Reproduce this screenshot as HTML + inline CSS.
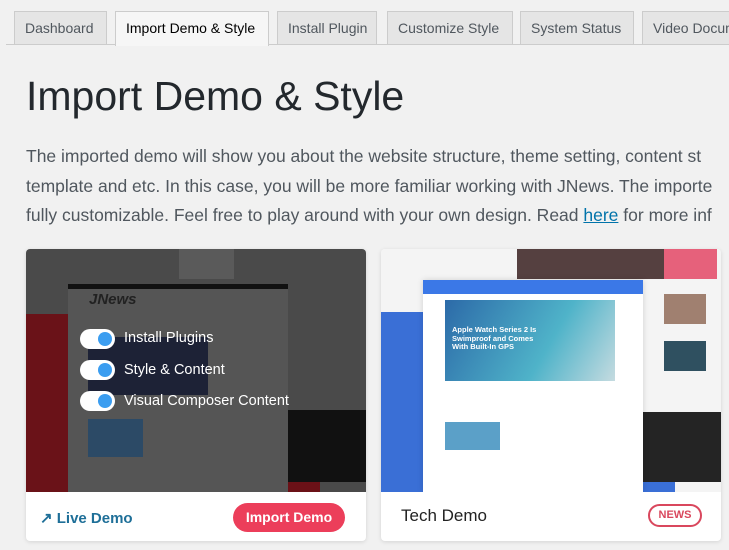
<!DOCTYPE html><html><head><style>
body{margin:0;width:729px;height:550px;overflow:hidden;background:#f1f1f1;font-family:"Liberation Sans",sans-serif;position:relative}
.tab{position:absolute;top:11px;height:33px;background:#e5e5e5;border:1px solid #ccc;border-bottom:none;font-size:14px;color:#50575e;line-height:33px;padding:0 10px;box-sizing:border-box;white-space:nowrap;overflow:hidden}
.tab.a{background:#f6f6f6;color:#000;height:35px}
.line{position:absolute;top:44px;left:6px;right:0;height:1px;background:#ccc}
h1{position:absolute;left:26px;top:73px;margin:0;font-weight:400;font-size:41px;color:#23282d}
p{position:absolute;left:26px;top:142px;margin:0;font-size:17.5px;line-height:29.5px;color:#50575e;white-space:nowrap}
a{color:#0073aa}
.card{position:absolute;top:249px;width:340px;height:292px;background:#fff;border-radius:4px;box-shadow:0 1px 4px rgba(0,0,0,.12);overflow:hidden}
.img{position:absolute;left:0;top:0;width:340px;height:243px;overflow:hidden}
.b{position:absolute}
.tg{position:absolute;left:54px;width:35px;height:20px;border-radius:10px;background:#fff}
.tg:after{content:"";position:absolute;right:3px;top:3px;width:14px;height:14px;border-radius:50%;background:#3b9df0}
.tl{position:absolute;left:98px;color:#fff;font-size:14.5px}
</style></head><body>
<div class="line"></div>
<div class="tab" style="left:14px;width:93px">Dashboard</div>
<div class="tab a" style="left:115px;width:154px">Import Demo &amp; Style</div>
<div class="tab" style="left:277px;width:100px">Install Plugin</div>
<div class="tab" style="left:387px;width:126px">Customize Style</div>
<div class="tab" style="left:520px;width:114px">System Status</div>
<div class="tab" style="left:642px;width:100px">Video Documentation</div>
<h1>Import Demo &amp; Style</h1>
<p>The imported demo will show you about the website structure, theme setting, content st<br>template and etc. In this case, you will be more familiar working with JNews. The importe<br>fully customizable. Feel free to play around with your own design. Read <a href="#">here</a> for more inf</p>

<div class="card" style="left:26px">
<div class="img" style="background:#4a4a4a">
<div class="b" style="left:0;top:65px;width:42px;height:178px;background:#6a1218"></div>
<div class="b" style="left:42px;top:35px;width:220px;height:208px;background:#555"></div>
<div class="b" style="left:42px;top:35px;width:220px;height:5px;background:#111"></div>
<div class="b" style="left:62px;top:88px;width:120px;height:58px;background:#1d2236"></div>
<div class="b" style="left:62px;top:170px;width:55px;height:38px;background:#2c4a66"></div>
<div class="b" style="left:262px;top:161px;width:78px;height:72px;background:#111"></div>
<div class="b" style="left:262px;top:233px;width:32px;height:10px;background:#6b1117"></div>
<div class="b" style="left:153px;top:0;width:55px;height:30px;background:#5a5a5a"></div>
<div class="b" style="left:63px;top:42px;font:italic bold 15px 'Liberation Sans';color:#222">JNews</div>
<div class="tg" style="top:80px"></div><div class="tl" style="top:81px">Install Plugins</div>
<div class="tg" style="top:111px"></div><div class="tl" style="top:113px">Style &amp; Content</div>
<div class="tg" style="top:142px"></div><div class="tl" style="top:144px">Visual Composer Content</div>
</div>
<div class="b" style="left:14px;top:260px;color:#1e6f98;font-size:15px;font-weight:bold">&#x2197;&#xFE0E; Live Demo</div>
<div class="b" style="left:207px;top:254px;width:112px;height:29px;border-radius:15px;background:#ec3e5a;color:#fff;font-size:14px;font-weight:bold;text-align:center;line-height:29px">Import Demo</div>
</div>

<div class="card" style="left:381px">
<div class="img" style="background:#f4f4f4">
<div class="b" style="left:0;top:63px;width:42px;height:180px;background:#3a6fd6"></div>
<div class="b" style="left:136px;top:0;width:200px;height:30px;background:#554040"></div>
<div class="b" style="left:283px;top:0;width:53px;height:30px;background:#e6617b"></div>
<div class="b" style="left:262px;top:163px;width:78px;height:70px;background:#242424"></div>
<div class="b" style="left:262px;top:233px;width:32px;height:10px;background:#3a6fd6"></div>
<div class="b" style="left:283px;top:45px;width:42px;height:30px;background:#a08070"></div>
<div class="b" style="left:283px;top:92px;width:42px;height:30px;background:#2f5060"></div>
<div class="b" style="left:42px;top:31px;width:220px;height:212px;background:#fff;box-shadow:0 0 6px rgba(0,0,0,.15)"></div>
<div class="b" style="left:42px;top:31px;width:220px;height:14px;background:#3b78e7"></div>
<div class="b" style="left:64px;top:51px;width:170px;height:81px;background:linear-gradient(120deg,#2c6aa8,#4fb3c9 60%,#c5dbe0)"></div>
<div class="b" style="left:71px;top:77px;color:#fff;font-size:7.5px;font-weight:bold;line-height:8.5px">Apple Watch Series 2 Is<br>Swimproof and Comes<br>With Built-In GPS</div>
<div class="b" style="left:64px;top:173px;width:55px;height:28px;background:#5ba0c8"></div>
</div>
<div class="b" style="left:20px;top:257px;color:#222;font-size:17px">Tech Demo</div>
<div class="b" style="left:267px;top:255px;width:50px;height:19px;border:2px solid #d9475d;border-radius:12px;color:#d9475d;font-size:11px;font-weight:bold;text-align:center;line-height:19px">NEWS</div>
</div>
</body></html>
